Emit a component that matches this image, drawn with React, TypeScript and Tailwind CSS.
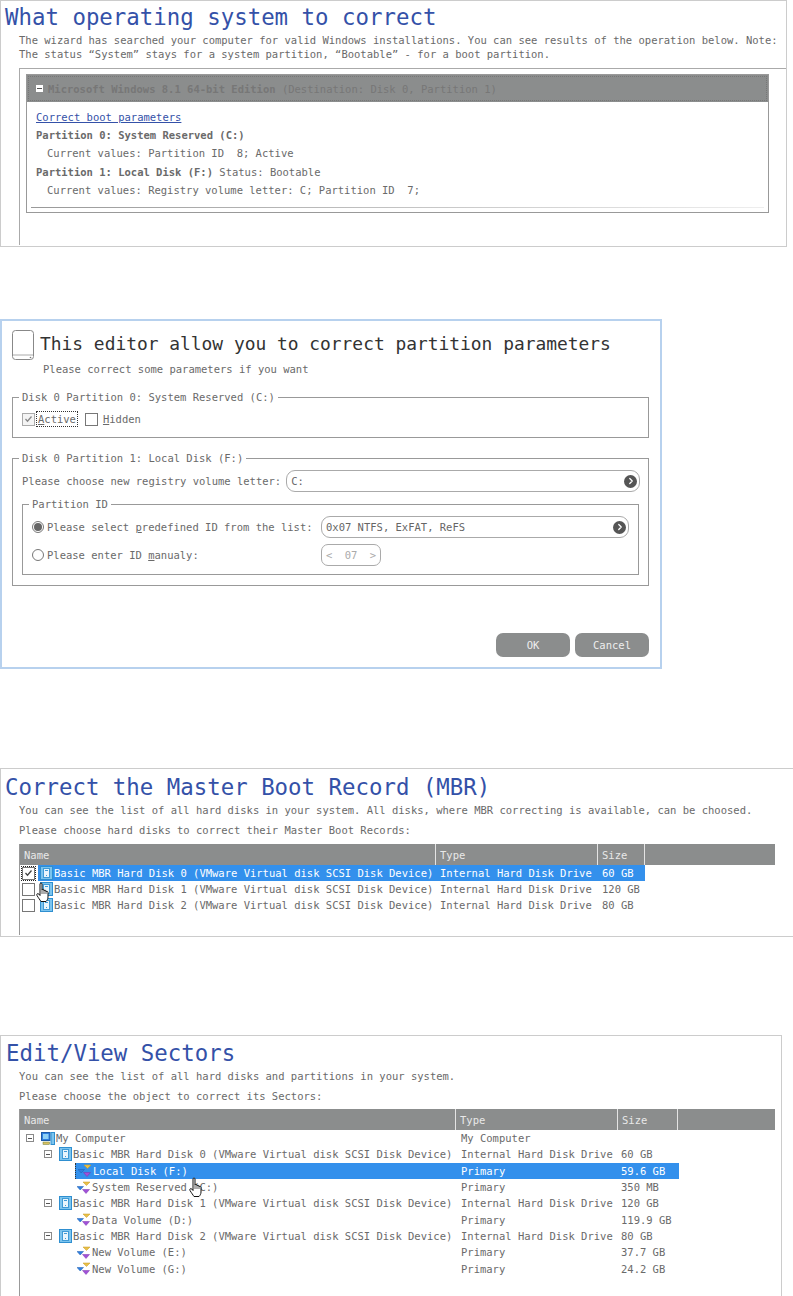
import { ChevronRight } from "lucide-react";

const mono = "font-['DejaVu_Sans_Mono','Liberation_Mono',monospace]";

function DiskIcon() {
  return (
    <svg width="13" height="14" viewBox="0 0 13 14" className="shrink-0">
      <rect x="0.5" y="0.5" width="12" height="13" fill="#7cc4ee" stroke="#2f8fd0" />
      <rect x="3.5" y="2.5" width="6" height="9" fill="#e8f5fc" stroke="#3f9ad6" />
      <rect x="5" y="4" width="3" height="1" fill="#3f9ad6" />
      <rect x="6" y="9" width="1" height="1" fill="#3f9ad6" />
    </svg>
  );
}

function VolumeIcon() {
  return (
    <svg width="14" height="13" viewBox="0 0 14 13" className="shrink-0">
      <path d="M6 1h7l-3.5 3.5z" fill="#e8c04a" stroke="#c99b1e" strokeWidth="0.5" />
      <path d="M0 5.5h6.5L3.2 9z" fill="#2f7fe0" stroke="#1f5fb0" strokeWidth="0.5" />
      <path d="M5.5 8.5h7L9 12.5z" fill="#a050d8" stroke="#7a35ad" strokeWidth="0.5" />
    </svg>
  );
}

function ComputerIcon() {
  return (
    <svg width="14" height="13" viewBox="0 0 14 13" className="shrink-0">
      <rect x="0.5" y="0.5" width="8.5" height="8" fill="#2f7fe0" stroke="#1c5aa8" />
      <rect x="2" y="2" width="5.5" height="5" fill="#8fd0f5" />
      <rect x="2" y="10" width="6.5" height="2.5" fill="#d8c060" stroke="#6a7f40" strokeWidth="0.5" />
      <rect x="10" y="0.5" width="3.5" height="12" fill="#7cc4ee" stroke="#2f8fd0" />
    </svg>
  );
}

function HandCursor({ className }: { className: string }) {
  return (
    <svg width="15" height="20" viewBox="0 0 15 20" className={className}>
      <path
        d="M5 2c0-1.3 2-1.3 2 0v6c0-1 2-1 2 0v1c0-1 2-1 2 0v1c0-1 2-.8 2 .3V15c0 2-1 3.5-2 4.5H6c-1-1.5-2.5-3.5-4-6-.8-1.3.7-2.6 1.8-1.5L5 13.5z"
        fill="#fff"
        stroke="#111"
        strokeWidth="1"
      />
      <path d="M7 8v4M9 9v3M11 10v2" stroke="#111" strokeWidth="0.7" />
    </svg>
  );
}

function Expander() {
  return (
    <span className="flex h-[8px] w-[8px] shrink-0 items-center justify-center border border-[#8a8a8a] bg-white">
      <span className="h-px w-[4px] bg-[#555]" />
    </span>
  );
}

function Check({ checked, dim }: { checked?: boolean; dim?: boolean }) {
  return (
    <span
      className={`flex h-[13px] w-[13px] shrink-0 items-center justify-center border ${dim ? "border-[#aaa] bg-[#f4f4f4]" : "border-[#777] bg-white"}`}
    >
      {checked && (
        <svg width="9" height="8" viewBox="0 0 9 8">
          <path d="M1.5 4l2 2.2L7.5 1.5" fill="none" stroke={dim ? "#888" : "#444"} strokeWidth="1.3" />
        </svg>
      )}
    </span>
  );
}

function Combo({ value, className }: { value: string; className: string }) {
  return (
    <div className={`flex h-[22px] items-center justify-between rounded-[9px] border border-[#aaa] pl-[4px] pr-[2px] text-[#666] ${className}`}>
      <span>{value}</span>
      <span className="flex h-[13px] w-[13px] items-center justify-center rounded-full bg-[#555]">
        <ChevronRight size={10} strokeWidth={3} color="#fff" />
      </span>
    </div>
  );
}

function Legend({ children }: { children: string }) {
  return <span className="absolute left-[6px] top-[-8px] bg-white px-[3px] leading-[15px]">{children}</span>;
}

function Radio({ on }: { on?: boolean }) {
  return (
    <span className="flex h-[12px] w-[12px] shrink-0 items-center justify-center rounded-full border border-[#777] bg-white">
      {on && <span className="h-[8px] w-[8px] rounded-full bg-[#666]" />}
    </span>
  );
}

type Row = {
  name: string;
  type: string;
  size: string;
  icon: "computer" | "disk" | "volume";
  selected?: boolean;
};

const sectorRows: Row[] = [
  { name: "My Computer", type: "My Computer", size: "", icon: "computer" },
  { name: "Basic MBR Hard Disk 0 (VMware Virtual disk SCSI Disk Device)", type: "Internal Hard Disk Drive", size: "60 GB", icon: "disk" },
  { name: "Local Disk (F:)", type: "Primary", size: "59.6 GB", icon: "volume", selected: true },
  { name: "System Reserved (C:)", type: "Primary", size: "350 MB", icon: "volume" },
  { name: "Basic MBR Hard Disk 1 (VMware Virtual disk SCSI Disk Device)", type: "Internal Hard Disk Drive", size: "120 GB", icon: "disk" },
  { name: "Data Volume (D:)", type: "Primary", size: "119.9 GB", icon: "volume" },
  { name: "Basic MBR Hard Disk 2 (VMware Virtual disk SCSI Disk Device)", type: "Internal Hard Disk Drive", size: "80 GB", icon: "disk" },
  { name: "New Volume (E:)", type: "Primary", size: "37.7 GB", icon: "volume" },
  { name: "New Volume (G:)", type: "Primary", size: "24.2 GB", icon: "volume" },
];

const mbrRows = [
  { name: "Basic MBR Hard Disk 0 (VMware Virtual disk SCSI Disk Device)", size: "60 GB", checked: true },
  { name: "Basic MBR Hard Disk 1 (VMware Virtual disk SCSI Disk Device)", size: "120 GB" },
  { name: "Basic MBR Hard Disk 2 (VMware Virtual disk SCSI Disk Device)", size: "80 GB" },
];

function TableHeader({ nameW, typeW, sizeW }: { nameW: string; typeW: string; sizeW: string }) {
  return (
    <div className="flex h-[21px] items-center bg-[#8b8d8d] text-[#e8e8e8]">
      <div className={`flex h-full items-center border-r border-[#e4e4e4] pl-[4px] ${nameW}`}>Name</div>
      <div className={`flex h-full items-center border-r border-[#e4e4e4] pl-[4px] ${typeW}`}>Type</div>
      <div className={`flex h-full items-center border-r border-[#e4e4e4] pl-[4px] ${sizeW}`}>Size</div>
    </div>
  );
}

export default function App() {
  return (
    <div className={`relative h-[1296px] w-[793px] overflow-hidden bg-white text-[10.5px] leading-[14px] text-[#6a6a6a] ${mono}`}>
      {/* OS list */}
      <section className="h-[247px] w-[787px] border border-[#ccc]">
        <h1 className="ml-[4px] mt-[2px] text-[22.4px] leading-[28px] text-[#3451a8]">What operating system to correct</h1>
        <div className="ml-[18px] mt-[2px] w-[770px]">
          <p className="whitespace-nowrap">The wizard has searched your computer for valid Windows installations. You can see results of the operation below. Note:</p>
          <p className="whitespace-nowrap">The status “System” stays for a system partition, “Bootable” - for a boot partition.</p>
        </div>
        <div className="ml-[18px] mt-[7px] h-[177px] border-l border-t border-[#aaa] pl-[6px] pt-[5px]">
          <div className="h-[139px] w-[743px] border border-[#999]">
            <div className="flex h-[27px] items-center gap-[5px] bg-[#8b8d8d] pl-[9px] font-bold text-[#777] outline-1 -outline-offset-2 outline-dotted outline-[#777]">
              <span className="flex h-[7px] w-[7px] items-center justify-center bg-white">
                <span className="h-px w-[5px] bg-[#555]" />
              </span>
              <span>
                Microsoft Windows 8.1 64-bit Edition <span className="font-normal">(Destination: Disk 0, Partition 1)</span>
              </span>
            </div>
            <div className="pl-[9px] pt-[8px]">
              <a className="text-[#3451a8] underline">Correct boot parameters</a>
              <p className="mt-[4px] font-bold">Partition 0: System Reserved (C:)</p>
              <p className="ml-[11px] mt-[4px] whitespace-pre">Current values: Partition ID  8; Active</p>
              <p className="mt-[5px]">
                <span className="font-bold">Partition 1: Local Disk (F:)</span> Status: Bootable
              </p>
              <p className="ml-[11px] mt-[4px] whitespace-pre">Current values: Registry volume letter: C; Partition ID  7;</p>
            </div>
            <div className="ml-[4px] mr-[4px] mt-[10px] h-px bg-gradient-to-r from-[#999] to-[#eee]" />
          </div>
        </div>
      </section>

      {/* Partition editor dialog */}
      <section className="mt-[72px] flex h-[350px] w-[662px] flex-col border-2 border-[#b7d1ee] pl-[10px] pr-[11px]">
        <div className="mt-[9px] flex items-start gap-[5px]">
          <svg width="23" height="31" viewBox="0 0 23 31" className="shrink-0">
            <rect x="0.5" y="0.5" width="21" height="29" rx="3" fill="#fff" stroke="#888" />
            <path d="M1 25h20" stroke="#aaa" />
            <circle cx="18.5" cy="27.5" r="0.8" fill="#777" />
          </svg>
          <h2 className="mt-[2px] text-[17.9px] leading-[24px] text-[#333]">This editor allow you to correct partition parameters</h2>
        </div>
        <p className="ml-[31px] mt-[1px]">Please correct some parameters if you want</p>

        <div className="relative mt-[21px] h-[41px] border border-[#999]">
          <Legend>Disk 0 Partition 0: System Reserved (C:)</Legend>
          <div className="ml-[9px] mt-[13px] flex items-center">
            <Check checked dim />
            <span className="ml-[1px] border border-dotted border-[#333] px-px">
              <u>A</u>ctive
            </span>
            <span className="ml-[7px]">
              <Check />
            </span>
            <span className="ml-[5px]">
              <u>H</u>idden
            </span>
          </div>
        </div>

        <div className="relative mt-[20px] h-[128px] border border-[#999]">
          <Legend>Disk 0 Partition 1: Local Disk (F:)</Legend>
          <div className="ml-[9px] mt-[11px] flex items-center">
            <span className="whitespace-nowrap">Please choose new registry volume letter:</span>
            <Combo value="C:" className="ml-[5px] w-[354px]" />
          </div>
          <div className="relative mx-[9px] mt-[12px] h-[71px] border border-[#999] pl-[9px] pt-[11px]">
            <Legend>Partition ID</Legend>
            <div className="flex items-center">
              <Radio on />
              <span className="ml-[3px] w-[270px] whitespace-nowrap">
                Please select <u>p</u>redefined ID from the list:
              </span>
              <Combo value="0x07 NTFS, ExFAT, ReFS" className="ml-[4px] w-[308px]" />
            </div>
            <div className="mt-[6px] flex items-center">
              <Radio />
              <span className="ml-[3px] w-[270px] whitespace-nowrap">
                Please enter ID <u>m</u>anualy:
              </span>
              <div className="ml-[4px] flex h-[22px] w-[60px] items-center justify-between rounded-[7px] border border-[#aaa] px-[4px] text-[#aaa]">
                <span>&lt;</span>
                <span>07</span>
                <span>&gt;</span>
              </div>
            </div>
          </div>
        </div>

        <div className="mt-[47px] flex justify-end gap-[5px]">
          <button className="h-[24px] w-[74px] rounded-[7px] bg-[#8b8d8d] text-[#eee]">OK</button>
          <button className="h-[24px] w-[74px] rounded-[7px] bg-[#8b8d8d] text-[#eee]">Cancel</button>
        </div>
      </section>

      {/* MBR */}
      <section className="mt-[99px] h-[169px] w-[793px] border-b border-l border-t border-[#ccc]">
        <h1 className="ml-[4px] mt-[4px] text-[22.4px] leading-[28px] text-[#3451a8]">Correct the Master Boot Record (MBR)</h1>
        <p className="ml-[18px] mt-[2px] whitespace-nowrap">You can see the list of all hard disks in your system. All disks, where MBR correcting is available, can be choosed.</p>
        <p className="ml-[18px] mt-[6px] whitespace-nowrap">Please choose hard disks to correct their Master Boot Records:</p>
        <div className="ml-[18px] mt-[7px] h-[91px] w-[756px] border-l border-[#999]">
          <TableHeader nameW="w-[416px]" typeW="w-[162px]" sizeW="w-[47px]" />
          <div>
            {mbrRows.map((row) => (
              <div key={row.name} className="flex h-[16px] items-center pl-[2px]">
                <span className={row.checked ? "outline-1 outline-dotted outline-[#222]" : ""}>
                  <Check checked={row.checked} />
                </span>
                <div className={`ml-[3px] flex h-full w-[607px] items-center ${row.checked ? "bg-[#3390ec] text-white" : ""}`}>
                  <span className="ml-[2px]"><DiskIcon /></span>
                  <span className="ml-px w-[386px] whitespace-nowrap">{row.name}</span>
                  <span className="w-[162px] whitespace-nowrap">Internal Hard Disk Drive</span>
                  <span>{row.size}</span>
                </div>
              </div>
            ))}
          </div>
        </div>
      </section>

      {/* Sectors */}
      <section className="mt-[98px] h-[262px] w-[782px] border-l border-r border-t border-[#ccc]">
        <h1 className="ml-[5px] mt-[3px] text-[22.4px] leading-[28px] text-[#3451a8]">Edit/View Sectors</h1>
        <p className="ml-[18px] mt-[2px] whitespace-nowrap">You can see the list of all hard disks and partitions in your system.</p>
        <p className="ml-[18px] mt-[6px] whitespace-nowrap">Please choose the object to correct its Sectors:</p>
        <div className="ml-[18px] mt-[6px] h-[190px] w-[756px] border-l border-[#999]">
          <TableHeader nameW="w-[436px]" typeW="w-[162px]" sizeW="w-[60px]" />
          <div>
            {sectorRows.map((row) => (
              <div key={row.name} className="flex h-[16.3px] w-[659px] items-center">
                {row.icon === "computer" && (
                  <span className="flex w-[21px] shrink-0 pl-[6px]"><Expander /></span>
                )}
                {row.icon === "disk" && (
                  <span className="flex w-[39px] shrink-0 pl-[24px]"><Expander /></span>
                )}
                {row.icon === "volume" && <span className="w-[55px] shrink-0" />}
                <div className={`flex h-full min-w-0 flex-1 items-center ${row.selected ? "border-l border-dotted border-[#333] bg-[#3390ec] text-white" : ""}`}>
                  {row.icon === "volume" && (
                    <span className="ml-[2px]"><VolumeIcon /></span>
                  )}
                  {row.icon === "disk" && <DiskIcon />}
                  {row.icon === "computer" && <ComputerIcon />}
                  <span className="min-w-0 flex-1 whitespace-nowrap pl-px">{row.name}</span>
                  <span className="w-[160px] shrink-0 whitespace-nowrap">{row.type}</span>
                  <span className="w-[58px] shrink-0 whitespace-nowrap">{row.size}</span>
                </div>
              </div>
            ))}
          </div>
        </div>
      </section>

      {/* cursors sit over the list rows */}
      <HandCursor className="absolute left-[35px] top-[882px]" />
      <HandCursor className="absolute left-[188px] top-[1177px]" />
    </div>
  );
}
